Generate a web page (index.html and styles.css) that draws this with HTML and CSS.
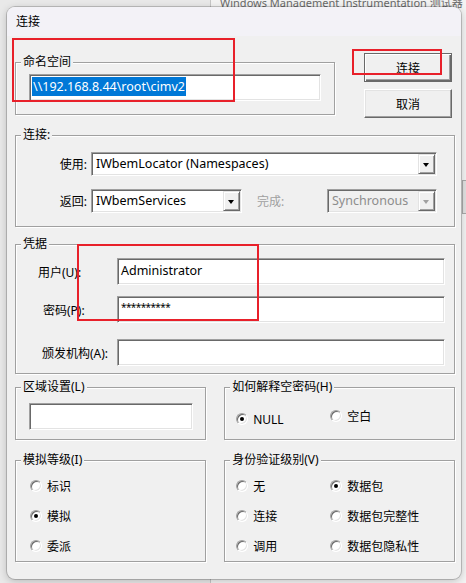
FILE: index.html
```html
<!DOCTYPE html>
<html>
<head>
    <title>连接</title>
    <link rel="stylesheet" href="styles.css">
</head>
<body>
<div class="desk">
    <div class="bg-window">
        <div class="bg-title">Windows Management Instrumentation 测试器</div>
        <div class="bg-side">
            <div class="bg-btn"></div>
        </div>
    </div>

    <div class="dialog">
        <div class="titlebar">连接</div>
        <div class="dialog-body">
            <div class="top-row">
                <fieldset class="group group-ns">
                    <legend>命名空间</legend>
                    <div class="ns-body">
                        <div class="field field-ns"><span class="sel">\\192.168.8.44\root\cimv2</span></div>
                    </div>
                </fieldset>
                <div class="buttons">
                    <button class="btn btn-default">连接</button>
                    <button class="btn">取消</button>
                </div>
            </div>

            <fieldset class="group group-conn">
                <legend>连接:</legend>
                <div class="conn-body">
                    <div class="row">
                        <span class="conn-label">使用:</span>
                        <div class="combo combo-use">
                            <span class="combo-text">IWbemLocator (Namespaces)</span>
                            <span class="arrow"></span>
                        </div>
                    </div>
                    <div class="row row-second">
                        <span class="conn-label">返回:</span>
                        <div class="combo combo-ret">
                            <span class="combo-text">IWbemServices</span>
                            <span class="arrow"></span>
                        </div>
                        <span class="done-label">完成:</span>
                        <div class="combo combo-done disabled">
                            <span class="combo-text">Synchronous</span>
                            <span class="arrow"></span>
                        </div>
                    </div>
                </div>
            </fieldset>

            <fieldset class="group group-cred">
                <legend>凭据</legend>
                <div class="cred-body">
                    <div class="row">
                        <span class="cred-label lbl-user">用户(U):</span>
                        <div class="field field-cred">Administrator</div>
                    </div>
                    <div class="row row-pass">
                        <span class="cred-label lbl-pass">密码(P):</span>
                        <div class="field field-cred pass">**********</div>
                    </div>
                    <div class="row row-auth">
                        <span class="cred-label lbl-auth">颁发机构(A):</span>
                        <div class="field field-cred"></div>
                    </div>
                </div>
            </fieldset>

            <div class="pair pair-locale">
                <fieldset class="group group-small">
                    <legend>区域设置(L)</legend>
                    <div class="locale-body">
                        <div class="field field-locale"></div>
                    </div>
                </fieldset>
                <fieldset class="group group-wide">
                    <legend>如何解释空密码(H)</legend>
                    <div class="null-body">
                        <label class="radio"><i class="on"></i>NULL</label>
                        <label class="radio radio-up"><i></i>空白</label>
                    </div>
                </fieldset>
            </div>

            <div class="pair pair-level">
                <fieldset class="group group-small">
                    <legend>模拟等级(I)</legend>
                    <div class="imp-body">
                        <label class="radio"><i></i>标识</label>
                        <label class="radio"><i class="on"></i>模拟</label>
                        <label class="radio"><i></i>委派</label>
                    </div>
                </fieldset>
                <fieldset class="group group-wide">
                    <legend>身份验证级别(V)</legend>
                    <div class="auth-body">
                        <label class="radio"><i></i>无</label>
                        <label class="radio"><i class="on"></i>数据包</label>
                        <label class="radio"><i></i>连接</label>
                        <label class="radio"><i></i>数据包完整性</label>
                        <label class="radio"><i></i>调用</label>
                        <label class="radio"><i></i>数据包隐私性</label>
                    </div>
                </fieldset>
            </div>
        </div>
    </div>

    <div class="mark mark-ns"></div>
    <div class="mark mark-btn"></div>
    <div class="mark mark-cred"></div>
</div>
</body>
</html>
```

FILE: styles.css
```css
body {
    margin: 0;
    font-family: "Noto Sans", "Noto Sans CJK SC", sans-serif;
    font-size: 12px;
    color: #000;
}
.desk {
    position: relative;
    width: 466px;
    height: 583px;
    background: #e9e9e9;
    overflow: hidden;
}

/* window behind the dialog */
.bg-window {
    position: absolute;
    left: 210px;
    top: -30px;
    width: 300px;
    height: 640px;
    background: #f3f3f3;
    border-left: 1px solid #c6c6c6;
}
.bg-title {
    padding: 26px 0 0 9px;
    font-size: 11px;
    line-height: 14px;
    color: #6a6a6a;
    white-space: nowrap;
}
.bg-side {
    margin: 0 0 0 251px;
    padding-top: 170px;
}
.bg-btn {
    height: 32px;
    border: 1px solid #a9a9a9;
    background: #e1e1e1;
}

/* dialog */
.dialog {
    position: absolute;
    left: 7px;
    top: 7px;
    width: 454px;
    height: 572px;
    border-radius: 8px;
    overflow: hidden;
    background: #f0f0f0;
    box-shadow: 0 0 0 1px rgba(0,0,0,0.18), 0 2px 8px rgba(0,0,0,0.22);
}
.titlebar {
    height: 29px;
    line-height: 29px;
    padding-left: 9px;
    background: #f3f2f7;
}
.dialog-body {
    padding: 17px 6px 0 8px;
}
.top-row {
    display: flex;
    align-items: flex-start;
}

/* group boxes */
.group {
    margin: 0;
    padding: 0;
    min-width: 0;
    border: 1px solid #a0a0a0;
    box-shadow: inset 1px 1px 0 #fff, 1px 1px 0 #fff;
}
.group legend {
    margin-left: 5px;
    padding: 0 2px;
    line-height: 14px;
    background: #f0f0f0;
}
.group-ns {
    width: 318px;
    margin-top: 2px;
}
.ns-body {
    padding: 5px 11px 13px 13px;
}
.group-conn {
    margin-top: 10px;
}
.conn-body {
    padding: 10px 0 13px 0;
}
.group-cred {
    margin-top: 10px;
}
.cred-body {
    padding: 7px 0 7px 0;
}

.row {
    display: flex;
    align-items: center;
}
.row-second {
    margin-top: 13px;
}
.row-pass {
    margin-top: 11px;
}
.row-auth {
    margin-top: 16px;
}

.conn-label {
    width: 71px;
    margin-right: 4px;
    text-align: right;
}
.done-label {
    width: 70px;
    margin-left: 15px;
    color: #a0a0a0;
}
.cred-label {
    width: 101px;
    box-sizing: border-box;
}
.lbl-user { padding-left: 22px; }
.lbl-pass { padding-left: 27px; }
.lbl-auth { padding-left: 26px; }

/* sunken fields */
.field {
    height: 27px;
    box-sizing: border-box;
    background: #fff;
    border: 1px solid;
    border-color: #a0a0a0 #fff #fff #a0a0a0;
    box-shadow: inset 1px 1px 0 #696969, inset -1px -1px 0 #e3e3e3;
    font-size: 12.5px;
    line-height: 23px;
    padding-left: 3px;
    white-space: nowrap;
}
.field-ns {
    width: 292px;
    padding-left: 2px;
}
.sel {
    display: inline-block;
    margin-top: 2px;
    height: 19px;
    line-height: 19px;
    padding: 0 1px;
    background: #0078d7;
    color: #fff;
}
.field-cred {
    width: 328px;
}
.pass {
    font-size: 10px;
    letter-spacing: -0.6px;
    line-height: 20px;
}
.field-locale {
    width: 164px;
}

/* combo boxes */
.combo {
    display: flex;
    height: 24px;
    box-sizing: border-box;
    background: #fff;
    border: 1px solid;
    border-color: #a0a0a0 #fff #fff #a0a0a0;
    box-shadow: inset 1px 1px 0 #696969, inset -1px -1px 0 #e3e3e3;
    padding: 1px;
    font-size: 12.5px;
}
.combo-use { width: 346px; }
.combo-ret { width: 151px; }
.combo-done { width: 110px; }
.combo-text {
    flex: 1;
    line-height: 20px;
    padding-left: 3px;
    white-space: nowrap;
}
.arrow {
    position: relative;
    width: 17px;
    box-sizing: border-box;
    background: #f0f0f0;
    border: 1px solid;
    border-color: #e3e3e3 #696969 #696969 #e3e3e3;
    box-shadow: inset 1px 1px 0 #fff, inset -1px -1px 0 #a0a0a0;
}
.arrow::after {
    content: "";
    position: absolute;
    left: 4px;
    top: 8px;
    border-left: 3.5px solid transparent;
    border-right: 3.5px solid transparent;
    border-top: 4px solid #000;
}
.disabled {
    background: #f0f0f0;
    color: #8d8d8d;
}
.disabled .arrow::after {
    border-top-color: #a0a0a0;
}

/* buttons */
.buttons {
    display: flex;
    flex-direction: column;
    gap: 7px;
    margin-left: 29px;
}
.btn {
    width: 88px;
    height: 29px;
    padding: 0;
    font-family: inherit;
    font-size: 12px;
    background: #f0f0f0;
    border: 1px solid;
    border-color: #fff #696969 #696969 #fff;
    box-shadow: inset -1px -1px 0 #a0a0a0, inset 1px 1px 0 #e3e3e3;
}
.btn-default {
    border: 1px solid #696969;
    box-shadow: inset 1px 1px 0 #fff, inset -1px -1px 0 #696969, inset -2px -2px 0 #a0a0a0;
}

/* bottom pairs */
.pair {
    display: flex;
    gap: 18px;
}
.pair-locale {
    margin-top: 6px;
}
.pair-level {
    margin-top: 13px;
}
.group-small {
    width: 191px;
}
.group-wide {
    width: 231px;
}
.locale-body {
    padding: 9px 0 9px 13px;
}
.null-body {
    display: flex;
    padding: 19px 0 14px 11px;
    height: 12px;
}
.null-body .radio {
    width: 94px;
    height: 12px;
}
.null-body .radio-up {
    position: relative;
    top: -3px;
}
.imp-body {
    padding: 4px 0 0 14px;
}
.auth-body {
    display: grid;
    grid-template-columns: 94px 94px;
    padding: 4px 0 0 11px;
}

/* radio buttons */
.radio {
    display: flex;
    align-items: center;
    height: 30px;
    white-space: nowrap;
}
.radio i {
    position: relative;
    width: 12px;
    height: 12px;
    box-sizing: border-box;
    margin-right: 5px;
    border-radius: 50%;
    background: #fff;
    border: 1px solid;
    border-color: #a0a0a0 #fff #fff #a0a0a0;
    box-shadow: inset 1px 1px 0 #696969, inset -1px -1px 0 #e3e3e3;
}
.radio i.on::after {
    content: "";
    position: absolute;
    left: 3px;
    top: 3px;
    width: 4px;
    height: 4px;
    border-radius: 50%;
    background: #000;
}

/* red annotation boxes */
.mark {
    position: absolute;
    border: 2px solid #e8202a;
}
.mark-ns {
    left: 12px;
    top: 38px;
    width: 219px;
    height: 60px;
}
.mark-btn {
    left: 352px;
    top: 49px;
    width: 86px;
    height: 22px;
}
.mark-cred {
    left: 77px;
    top: 244px;
    width: 178px;
    height: 73px;
}
```
